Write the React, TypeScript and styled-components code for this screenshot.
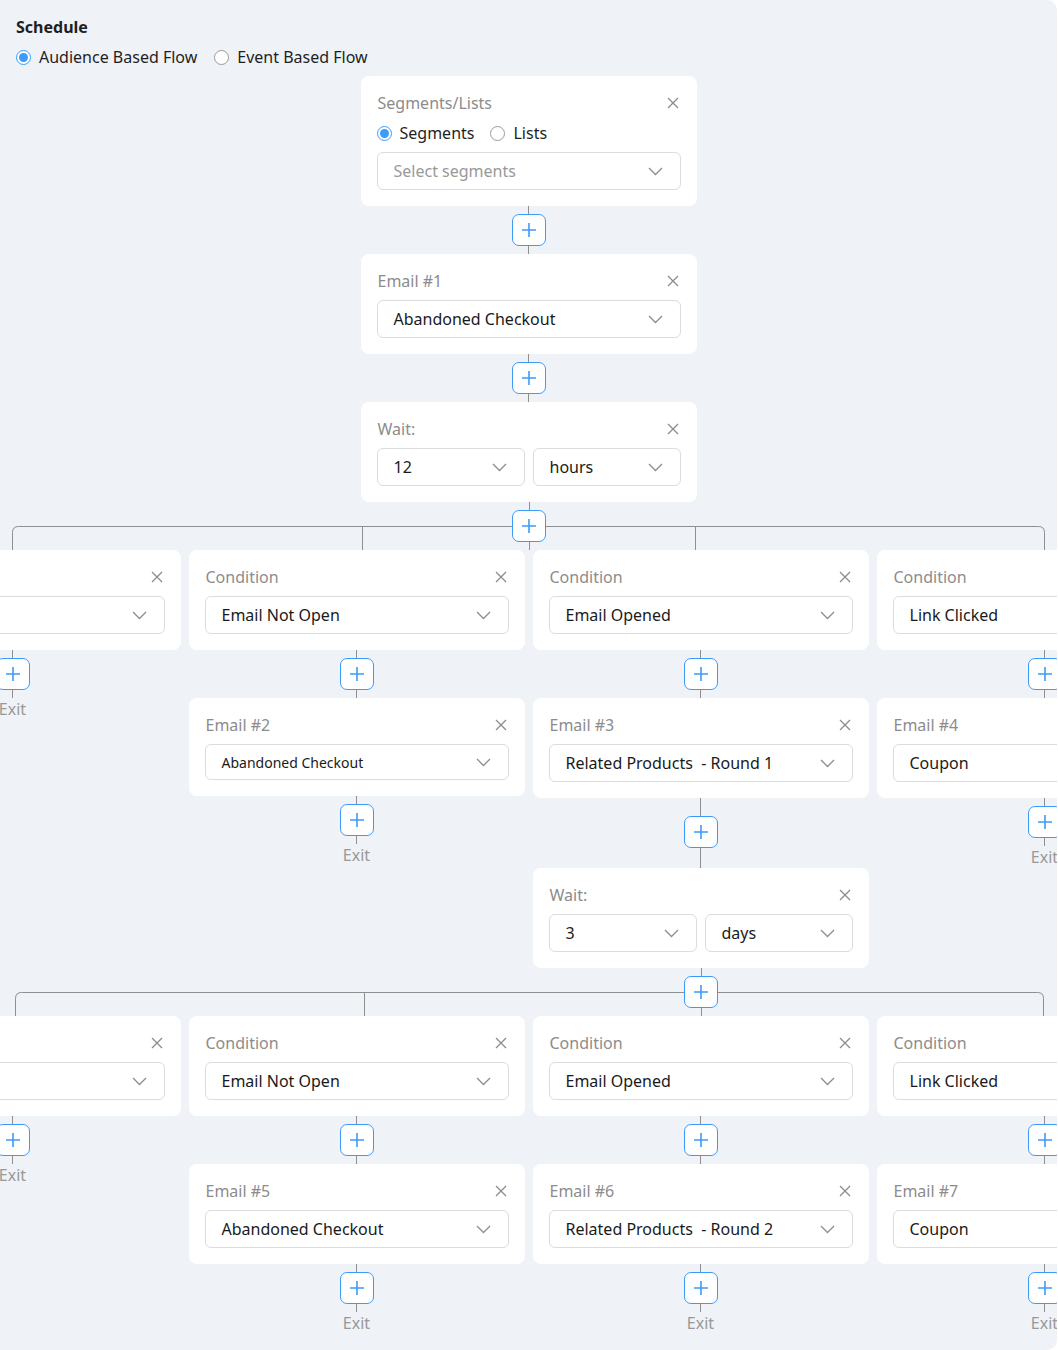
import React from "react";
import styled, { createGlobalStyle } from "styled-components";

const GlobalStyle = createGlobalStyle`
  html, body { margin: 0; padding: 0; background: #ffffff; }
  body { font-family: "Noto Sans", "Open Sans", sans-serif; color: #1f1f1f; }
  * { box-sizing: border-box; }
`;

const COL = 336;
const GAP = 8;
const GRID_W = COL * 4 + GAP * 3;

const Page = styled.div`
  width: 1057px;
  height: 1350px;
  background: #eff2f7;
  border-radius: 0 10px 10px 0;
  overflow: hidden;
  padding: 16px 0 0 0;
  display: flex;
  flex-direction: column;
`;

const Header = styled.div`
  padding: 0 16px;
  display: flex;
  flex-direction: column;
  gap: 8px;
`;

const Title = styled.div`
  font-size: 16px;
  line-height: 22px;
  font-weight: 700;
  color: #1f1f1f;
`;

const RadioRow = styled.div<{ $gap: number }>`
  display: flex;
  align-items: center;
  gap: ${(p) => p.$gap}px;
  height: 22px;
`;

const RadioLabel = styled.label`
  display: flex;
  align-items: center;
  gap: 8px;
  font-size: 16px;
  line-height: 22px;
  color: #1f1f1f;
`;

const RadioDot = styled.span<{ $on?: boolean }>`
  width: 15px;
  height: 15px;
  border-radius: 50%;
  border: 1px solid ${(p) => (p.$on ? "#3d9bfa" : "#9a9a9a")};
  background: #fff;
  display: inline-flex;
  align-items: center;
  justify-content: center;
  &::after {
    content: "";
    width: 9px;
    height: 9px;
    border-radius: 50%;
    background: ${(p) => (p.$on ? "#3d9bfa" : "transparent")};
  }
`;

const Flow = styled.div`
  display: flex;
  flex-direction: column;
  align-items: center;
  margin-top: 8px;
`;

const Card = styled.div`
  width: ${COL}px;
  flex: none;
  background: #ffffff;
  border-radius: 8px;
  padding: 16px;
  display: flex;
  flex-direction: column;
  gap: 8px;
`;

const CardHead = styled.div`
  display: flex;
  align-items: center;
  justify-content: space-between;
  height: 22px;
`;

const CardTitle = styled.div`
  font-size: 16px;
  line-height: 22px;
  color: #8c8c8c;
  padding-left: 1px;
`;

const CloseBtn = styled.span`
  display: inline-flex;
  width: 16px;
  height: 16px;
  align-items: center;
  justify-content: center;
`;

const SelectRow = styled.div`
  display: grid;
  grid-template-columns: 1fr 1fr;
  gap: 8px;
`;

const SelectBox = styled.div<{ $small?: boolean; $placeholder?: boolean }>`
  flex: none;
  height: ${(p) => (p.$small ? 36 : 38)}px;
  border: 1px solid #dcdcdc;
  border-radius: 6px;
  padding: 0 17px 0 16px;
  display: flex;
  align-items: center;
  justify-content: space-between;
  font-size: ${(p) => (p.$small ? 14 : 16)}px;
  color: ${(p) => (p.$placeholder ? "#999999" : "#1a1a1a")};
  white-space: pre;
  background: #fff;
`;

const Connector = styled.div`
  display: flex;
  flex-direction: column;
  align-items: center;
  flex: none;
`;

const VLine = styled.div<{ $h: number }>`
  width: 1px;
  height: ${(p) => p.$h}px;
  background: #8f8f8f;
`;

const AddButton = styled.button`
  width: 34px;
  height: 32px;
  border: 1px solid #3d9bfa;
  border-radius: 7px;
  background: #ffffff;
  padding: 0;
  display: flex;
  align-items: center;
  justify-content: center;
  cursor: pointer;
`;

const ExitText = styled.div`
  font-size: 16px;
  line-height: 22px;
  color: #999999;
`;

const GridWrap = styled.div`
  display: flex;
  justify-content: center;
  width: 100%;
`;

const Grid = styled.div`
  width: ${GRID_W}px;
  flex: none;
  display: grid;
  grid-template-columns: repeat(4, ${COL}px);
  column-gap: ${GAP}px;
  align-items: start;
`;

const Column = styled.div`
  display: flex;
  flex-direction: column;
  align-items: center;
`;

const Bar = styled.div`
  grid-column: 1 / -1;
  position: relative;
  height: 48px;
`;

const BarButton = styled.div<{ $x: number }>`
  position: absolute;
  top: 8px;
  left: ${(p) => p.$x - 17}px;
`;

const Chevron = () => (
  <svg width="15" height="9" viewBox="0 0 15 9">
    <polyline points="1,1 7.5,7.5 14,1" fill="none" stroke="#8c8c8c" strokeWidth="1.3" />
  </svg>
);

const CloseIcon = () => (
  <CloseBtn>
    <svg width="12" height="12" viewBox="0 0 12 12">
      <path d="M1 1 L11 11 M11 1 L1 11" stroke="#8c8c8c" strokeWidth="1.3" />
    </svg>
  </CloseBtn>
);

const PlusIcon = () => (
  <svg width="16" height="16" viewBox="0 0 16 16">
    <path d="M8 1 V15 M1 8 H15" stroke="#3d9bfa" strokeWidth="1.6" />
  </svg>
);

const Select = ({ value, small, placeholder }: { value: string; small?: boolean; placeholder?: boolean }) => (
  <SelectBox $small={small} $placeholder={placeholder}>
    <span>{value}</span>
    <Chevron />
  </SelectBox>
);

const Node = ({ title, children }: { title: string; children: React.ReactNode }) => (
  <Card>
    <CardHead>
      <CardTitle>{title}</CardTitle>
      <CloseIcon />
    </CardHead>
    {children}
  </Card>
);

const Link = ({ top = 8, bottom = 8, exit }: { top?: number; bottom?: number; exit?: boolean }) => (
  <Connector>
    <VLine $h={top} />
    <AddButton>
      <PlusIcon />
    </AddButton>
    <VLine $h={bottom} />
    {exit && <ExitText>Exit</ExitText>}
  </Connector>
);

type BarProps = { center: number; drops: number[]; left: number; right: number };

const BranchBar = ({ center, drops, left, right }: BarProps) => {
  const y = 24;
  const r = 6;
  return (
    <Bar>
      <svg width={GRID_W} height={48} style={{ display: "block" }}>
        <g fill="none" stroke="#8f8f8f" strokeWidth="1">
          <path d={`M${center + 0.5} 0 V48`} />
          <path
            d={`M${left + 0.5} 48 V${y + r + 0.5} Q${left + 0.5} ${y + 0.5} ${left + r + 0.5} ${y + 0.5} H${right - r + 0.5} Q${right + 0.5} ${y + 0.5} ${right + 0.5} ${y + r + 0.5} V48`}
          />
          {drops.map((d) => (
            <path key={d} d={`M${d + 0.5} ${y} V48`} />
          ))}
        </g>
      </svg>
      <BarButton $x={center + 0.5}>
        <AddButton>
          <PlusIcon />
        </AddButton>
      </BarButton>
    </Bar>
  );
};

const OFF = (GRID_W - 1058) / 2; // 155

export default function App() {
  return (
    <>
      <GlobalStyle />
      <Page>
        <Header>
          <Title>Schedule</Title>
          <RadioRow $gap={17}>
            <RadioLabel>
              <RadioDot $on />
              Audience Based Flow
            </RadioLabel>
            <RadioLabel>
              <RadioDot />
              Event Based Flow
            </RadioLabel>
          </RadioRow>
        </Header>

        <Flow>
          <Node title="Segments/Lists">
            <RadioRow $gap={16}>
              <RadioLabel>
                <RadioDot $on />
                Segments
              </RadioLabel>
              <RadioLabel>
                <RadioDot />
                Lists
              </RadioLabel>
            </RadioRow>
            <Select value="Select segments" placeholder />
          </Node>
          <Link />
          <Node title="Email #1">
            <Select value="Abandoned Checkout" />
          </Node>
          <Link />
          <Node title="Wait:">
            <SelectRow>
              <Select value="12" />
              <Select value="hours" />
            </SelectRow>
          </Node>
        </Flow>

        <GridWrap>
          <Grid>
            <BranchBar
              center={529 + OFF}
              left={12 + OFF}
              right={1044 + OFF}
              drops={[362 + OFF, 695 + OFF]}
            />

            <Column>
              <Node title="Condition">
                <Select value="Email Clicked" />
              </Node>
              <Link exit />
            </Column>
            <Column>
              <Node title="Condition">
                <Select value="Email Not Open" />
              </Node>
              <Link />
              <Node title="Email #2">
                <Select value="Abandoned Checkout" small />
              </Node>
              <Link exit />
            </Column>
            <Column>
              <Node title="Condition">
                <Select value="Email Opened" />
              </Node>
              <Link />
              <Node title="Email #3">
                <Select value="Related Products  - Round 1" />
              </Node>
              <Link top={18} bottom={20} />
              <Node title="Wait:">
                <SelectRow>
                  <Select value="3" />
                  <Select value="days" />
                </SelectRow>
              </Node>
            </Column>
            <Column>
              <Node title="Condition">
                <Select value="Link Clicked" />
              </Node>
              <Link />
              <Node title="Email #4">
                <Select value="Coupon" />
              </Node>
              <Link exit />
            </Column>

            <BranchBar
              center={701 + OFF}
              left={15 + OFF}
              right={1043 + OFF}
              drops={[364 + OFF]}
            />

            <Column>
              <Node title="Condition">
                <Select value="Email Clicked" />
              </Node>
              <Link exit />
            </Column>
            <Column>
              <Node title="Condition">
                <Select value="Email Not Open" />
              </Node>
              <Link />
              <Node title="Email #5">
                <Select value="Abandoned Checkout" />
              </Node>
              <Link exit />
            </Column>
            <Column>
              <Node title="Condition">
                <Select value="Email Opened" />
              </Node>
              <Link />
              <Node title="Email #6">
                <Select value="Related Products  - Round 2" />
              </Node>
              <Link exit />
            </Column>
            <Column>
              <Node title="Condition">
                <Select value="Link Clicked" />
              </Node>
              <Link />
              <Node title="Email #7">
                <Select value="Coupon" />
              </Node>
              <Link exit />
            </Column>
          </Grid>
        </GridWrap>
      </Page>
    </>
  );
}
